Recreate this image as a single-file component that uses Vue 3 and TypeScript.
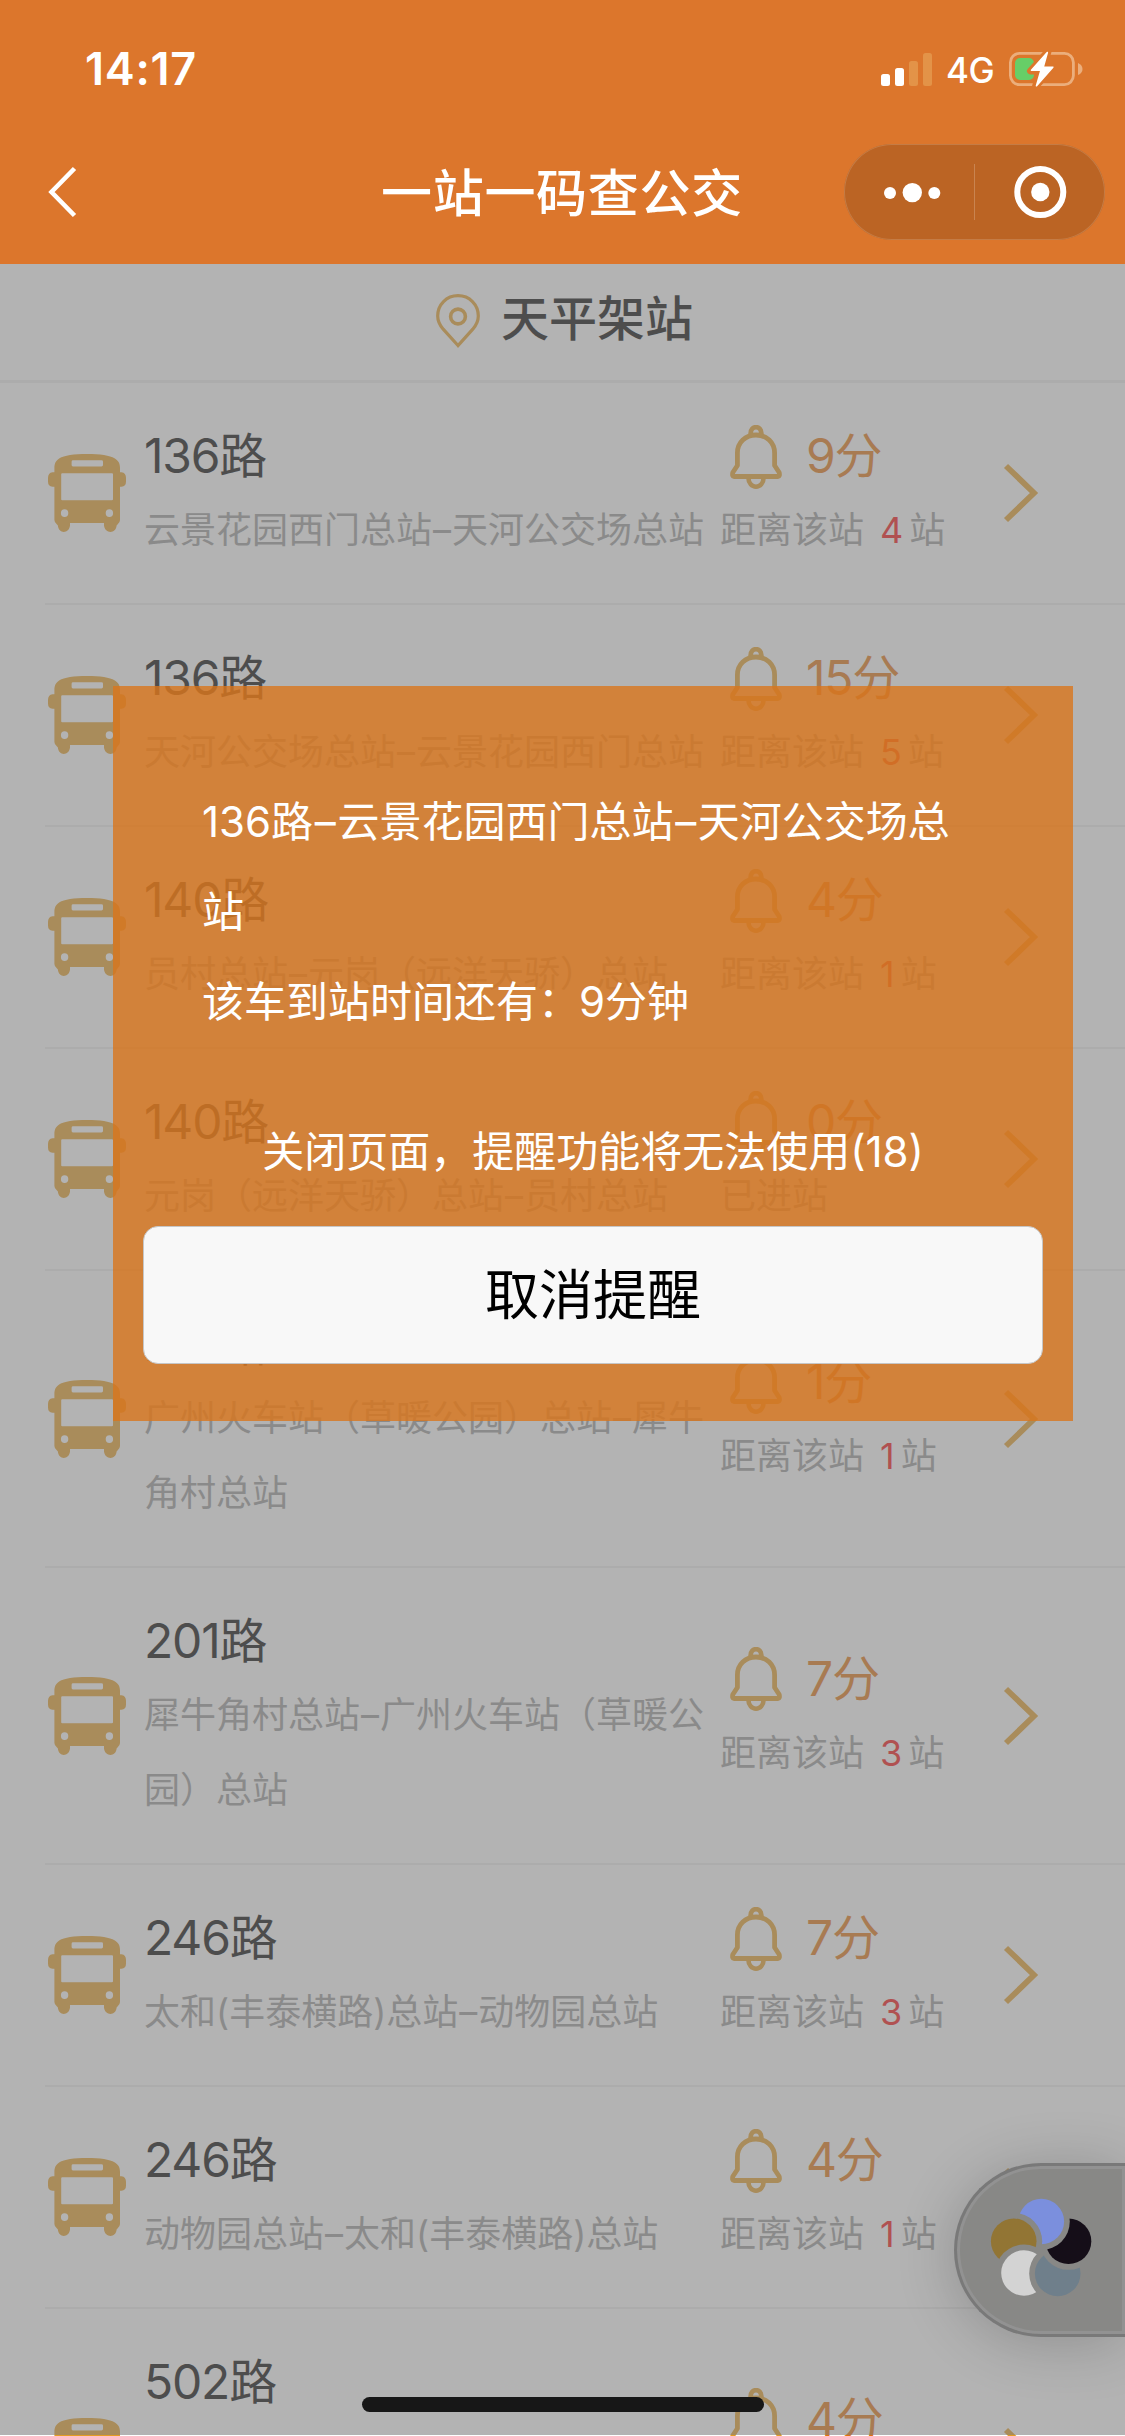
<script setup lang="ts">
interface Bus {
  route: string
  from: string
  to: string
  minutes: string
  status?: string
  left?: string
}

const stationName = '天平架站'

const buses: Bus[] = [
  { route: '136', from: '云景花园西门总站', to: '天河公交场总站', minutes: '9', left: '4' },
  { route: '136', from: '天河公交场总站', to: '云景花园西门总站', minutes: '15', left: '5' },
  { route: '140', from: '员村总站', to: '元岗（远洋天骄）总站', minutes: '4', left: '1' },
  { route: '140', from: '元岗（远洋天骄）总站', to: '员村总站', minutes: '0', status: '已进站' },
  { route: '201', from: '广州火车站（草暖公园）总站', to: '犀牛\n角村总站', minutes: '1', left: '1' },
  { route: '201', from: '犀牛角村总站', to: '广州火车站（草暖公\n园）总站', minutes: '7', left: '3' },
  { route: '246', from: '太和(丰泰横路)总站', to: '动物园总站', minutes: '7', left: '3' },
  { route: '246', from: '动物园总站', to: '太和(丰泰横路)总站', minutes: '4', left: '1' },
  { route: '502', from: '', to: '', minutes: '4' },
]

interface Petal {
  id: string
  x: number
  y: number
  cutX: number
  cutY: number
  color: string
}

const centers: [number, number, string][] = [
  [87.3, 58.5, '#7b8fdd'],
  [59.7, 78.3, '#927534'],
  [70, 110, '#d3d3d3'],
  [103.7, 110.5, '#6f7f8b'],
  [114.5, 78.3, '#150e18'],
]

// Each petal is bitten by the next one around the ring.
const petals: Petal[] = centers.map(([x, y, color], i) => {
  const next = centers[(i + 1) % centers.length]
  return { id: `petal-${i}`, x, y, cutX: next[0], cutY: next[1], color }
})
</script>

<template>
  <div class="screen">
    <header class="header">
      <div class="status">
        <span class="clock">14:17</span>
        <div class="indicators">
          <svg class="signal" width="51" height="33" viewBox="0 0 51 33">
            <rect x="0" y="21" width="9" height="12" rx="2.5" fill="#fff" />
            <rect x="14" y="15" width="9" height="18" rx="2.5" fill="#fff" />
            <rect x="28" y="8" width="9" height="25" rx="2.5" fill="#e39348" />
            <rect x="42" y="0" width="9" height="33" rx="2.5" fill="#e39348" />
          </svg>
          <span class="network">4G</span>
          <svg class="battery" width="76" height="38" viewBox="0 0 76 38">
            <rect x="2.4" y="3.4" width="63" height="31.2" rx="9" fill="none" stroke="#ebae7c" stroke-width="2.8" />
            <path d="M70 13q4.5 2 4.5 6t-4.5 6z" fill="#ebae7c" />
            <rect x="7" y="8" width="19" height="22" rx="5" fill="#67ce67" />
            <path d="M40 1.5L22.5 21H32L27.5 36.5L45.5 17H35.5Z" fill="#dc762c" stroke="#dc762c" stroke-width="7" stroke-linejoin="round" />
            <path d="M39.3 2.5L23.5 20.2H33L28.5 35.8L44.8 17.2H35.2Z" fill="#fff" stroke="#fff" stroke-width="1.6" stroke-linejoin="round" />
          </svg>
        </div>
      </div>
      <div class="nav">
        <svg class="back" width="30" height="52" viewBox="0 0 30 52">
          <path d="M27.5 2.5L4.500 26L27.5 49.5" fill="none" stroke="#fff" stroke-width="4.6" />
        </svg>
        <h1 class="nav-title">一站一码查公交</h1>
        <div class="capsule">
          <svg width="261" height="96" viewBox="0 0 261 96">
            <circle cx="46" cy="49" r="6" fill="#fff" />
            <circle cx="68.3" cy="48.6" r="9.7" fill="#fff" />
            <circle cx="90.3" cy="49" r="6" fill="#fff" />
            <path d="M130.5 20V76" stroke="#c98450" stroke-width="1" />
            <circle cx="196.3" cy="48" r="23" fill="none" stroke="#fff" stroke-width="6" />
            <circle cx="196.3" cy="48" r="9.2" fill="#fff" />
          </svg>
        </div>
      </div>
    </header>

    <main class="list">
      <div class="station">
        <svg width="44" height="54" viewBox="0 0 44 54" fill="none" stroke="#e69d23">
          <path d="M22 51.5L7.2 35.2C3.6 31 1.7 27 1.7 22C1.7 10.5 10.5 1.7 22 1.7S42.3 10.5 42.3 22C42.3 27 40.4 31 36.8 35.2Z" stroke-width="3.2" />
          <circle cx="22" cy="22.5" r="7.4" stroke-width="3.6" />
        </svg>
        <span class="station-name">{{ stationName }}</span>
      </div>

      <div v-for="(bus, i) in buses" :key="i" class="row">
        <svg class="bus" width="78" height="78" viewBox="0 0 78 78">
          <path
            fill="#e69d23"
            fill-rule="evenodd"
            d="M39 0C52 0 62 1.5 66.500 4.200C70.500 6.600 72 9.500 72 14V18.300H73.500Q78 19 78 24V27.500Q78 32.300 73.500 32.800H72V66Q72 68.500 69.500 70.500L68.600 71.500C68 80 57 80 56 71.500V69H22V71.500C21 80 10.500 80 9.900 71.500L9 70.500Q6.400 68.500 6.400 66V32.800H4.500Q0 32.300 0 27.500V24Q0 19 4.500 18.300H6.400V14C6.400 9.500 7.800 6.600 11.500 4.200C16 1.500 26 0 39 0ZM25 6.300Q23.600 6.300 23.600 7.700V11Q23.600 12.400 25 12.400H53.500Q55 12.400 55 11V7.700Q55 6.300 53.500 6.300ZM14.200 19.200Q13.200 19.200 13.200 20.200V45.300Q13.200 46.300 14.200 46.300H64Q65 46.300 65 45.300V20.200Q65 19.200 64 19.200ZM16.600 55.200A3.700 3.900 0 1 0 16.600 63A3.700 3.900 0 1 0 16.600 55.200ZM61.400 55.200A3.700 3.900 0 1 0 61.400 63A3.700 3.900 0 1 0 61.400 55.200Z"
          />
        </svg>
        <div class="info">
          <div class="route"><span class="num">{{ bus.route }}</span>路</div>
          <div v-if="bus.from" class="stops">{{ bus.from }}<span class="dash">–</span>{{ bus.to }}</div>
          <div v-else class="stops pending"></div>
        </div>
        <div class="arrival">
          <div class="eta">
            <svg class="bell" width="52" height="64" viewBox="0 0 52 64" fill="none" stroke="#e69d23">
              <path d="M20.700 10.500V8.200A5.300 6 0 0 1 31.300 8.200V10.500" stroke-width="4.800" />
              <path d="M26 10C15.500 10 7.400 17.500 7.400 28V40.500L2.800 47.500Q2 51.500 4 51.500H48Q50 51.500 49.200 47.500L44.600 40.500V28C44.600 17.500 36.500 10 26 10Z" stroke-width="4.800" stroke-linejoin="round" />
              <path d="M18.500 53.500A7.500 8.200 0 0 0 33.500 53.500" stroke-width="4.600" />
            </svg>
            <span><span class="num">{{ bus.minutes }}</span>分</span>
          </div>
          <div class="distance">
            <template v-if="bus.left">距离该站<b>{{ bus.left }}</b>站</template>
            <template v-else>{{ bus.status }}</template>
          </div>
        </div>
        <svg class="arrow" width="36" height="60" viewBox="0 0 36 60">
          <path d="M3 3L31 30L3 57" fill="none" stroke="#e69d23" stroke-width="5.800" />
        </svg>
      </div>
    </main>

    <div class="mask"></div>

    <section class="dialog">
      <p class="message">
        136路<span class="dash">–</span>云景花园西门总站<span class="dash">–</span>天河公交场总<br />站<br />该车到站时间还有：<span class="wait">9分钟</span>
      </p>
      <p class="hint">关闭页面，提醒功能将无法使用(18)</p>
      <button class="cancel" type="button">取消提醒</button>
    </section>

    <div class="floating">
      <svg width="171" height="174" viewBox="0 0 171 174">
        <defs>
          <mask v-for="p in petals" :id="p.id" :key="p.id" maskUnits="userSpaceOnUse" x="0" y="0" width="171" height="174">
            <rect width="171" height="174" fill="#fff" />
            <circle :cx="p.cutX" :cy="p.cutY" r="28.5" fill="#000" />
          </mask>
        </defs>
        <circle v-for="p in petals" :key="p.id" :cx="p.x" :cy="p.y" r="22.800" :fill="p.color" :mask="`url(#${p.id})`" />
      </svg>
    </div>

    <div class="home-bar"></div>
  </div>
</template>

<style>
body {
  margin: 0;
  background: #fff;
}
</style>

<style scoped>
.screen {
  position: relative;
  width: 1125px;
  height: 2436px;
  overflow: hidden;
  background: #fff;
  color: #000;
  font-family: Inter, "Noto Sans CJK SC", sans-serif;
}

.header {
  display: flex;
  flex-direction: column;
  height: 264px;
  background: #dc762c;
  color: #fff;
}

.status {
  display: flex;
  align-items: center;
  justify-content: space-between;
  height: 120px;
  padding: 18px 41px 0 85px;
  box-sizing: border-box;
}

.clock {
  margin-top: -2px;
  font-size: 45px;
  font-weight: 600;
  letter-spacing: 0.7px;
}

.indicators {
  display: flex;
  align-items: center;
}

.network {
  margin: 1px 14px 0 14px;
  font-size: 35px;
  font-weight: 500;
  line-height: 40px;
  letter-spacing: -0.6px;
}

.nav {
  display: flex;
  align-items: center;
  height: 96px;
  margin-top: 24px;
  padding: 0 20px 0 47px;
}

.nav-title {
  flex: 1;
  margin: 3px 0 0 304px;
  font-size: 51px;
  font-weight: 500;
  line-height: 96px;
  letter-spacing: 0.7px;
  white-space: nowrap;
}

.capsule {
  width: 261px;
  height: 96px;
  border-radius: 48px;
  background: #bb6424;
  box-shadow: inset 0 0 0 1px #c57c45;
}

.capsule svg {
  display: block;
}

.station {
  display: flex;
  align-items: center;
  justify-content: center;
  height: 116px;
  padding-left: 4px;
  border-bottom: 3px solid #eee;
}

.station svg {
  margin: -3px 21px 0 0;
}

.station-name {
  margin-top: -14px;
  font-size: 48px;
  font-weight: 500;
}

.row {
  display: flex;
  align-items: center;
  margin-left: 45px;
  padding: 36px 0 34px;
  border-bottom: 2px solid #eee;
}

.bus {
  flex: none;
  margin: -2px 18px 0 3px;
}

.info {
  flex: none;
  width: 576px;
}

.route {
  font-size: 48px;
  line-height: 74px;
}

.num {
  letter-spacing: -1.2px;
}

.stops {
  min-height: 75px;
  padding-bottom: 1px;
  color: #999;
  font-size: 36px;
  line-height: 75px;
  white-space: pre;
}

.stops .dash {
  margin: 0 1px;
}

.stops.pending {
  min-height: 150px;
}

.arrival {
  flex: none;
  width: 283px;
}

.eta {
  display: flex;
  align-items: center;
  height: 74px;
  color: #e3730d;
  font-size: 48px;
  line-height: 74px;
}

.bell {
  margin: 1px 24px 0 10px;
}

.distance {
  height: 75px;
  padding-bottom: 1px;
  color: #999;
  font-size: 36px;
  line-height: 75px;
  white-space: nowrap;
}

.distance b {
  margin: 0 6px 0 16px;
  color: #f70c0c;
  font-weight: 400;
}

.arrow {
  flex: none;
  margin-top: -2px;
}

.mask {
  position: absolute;
  top: 264px;
  left: 0;
  width: 1125px;
  height: 2171px;
  background: rgba(128, 128, 128, 0.6);
}

.dialog {
  position: absolute;
  top: 686px;
  left: 113px;
  width: 960px;
  height: 735px;
  padding: 91px 30px 0;
  box-sizing: border-box;
  background: rgba(218, 118, 28, 0.8);
  color: #fff;
  font-size: 42px;
  line-height: 90px;
}

.message {
  margin: 0 0 0 59px;
  white-space: nowrap;
}

.message .dash {
  margin: 0 1.7px;
}

.wait {
  margin-left: -1px;
}

.hint {
  margin: 60px 0 29px;
  text-align: center;
  white-space: nowrap;
}

.cancel {
  display: block;
  width: 900px;
  height: 138px;
  padding: 0 0 8px;
  border: 1px solid #c6c6c6;
  border-radius: 15px;
  background: #f8f8f8;
  color: #000;
  font-family: inherit;
  font-size: 54px;
}

.floating {
  position: absolute;
  top: 2163px;
  left: 954px;
  width: 171px;
  height: 174px;
  box-sizing: border-box;
  border: 3px solid #797979;
  border-right: 0;
  border-radius: 87px 0 0 87px;
  background: #888886;
  box-shadow: inset 0 0 0 3px #929292, 0 6px 60px rgba(0, 0, 0, 0.2);
}

.floating svg {
  display: block;
  margin: -3px 0 0 -3px;
}

.home-bar {
  position: absolute;
  top: 2397px;
  left: 362px;
  width: 402px;
  height: 15px;
  border-radius: 8px;
  background: #171717;
}
</style>
